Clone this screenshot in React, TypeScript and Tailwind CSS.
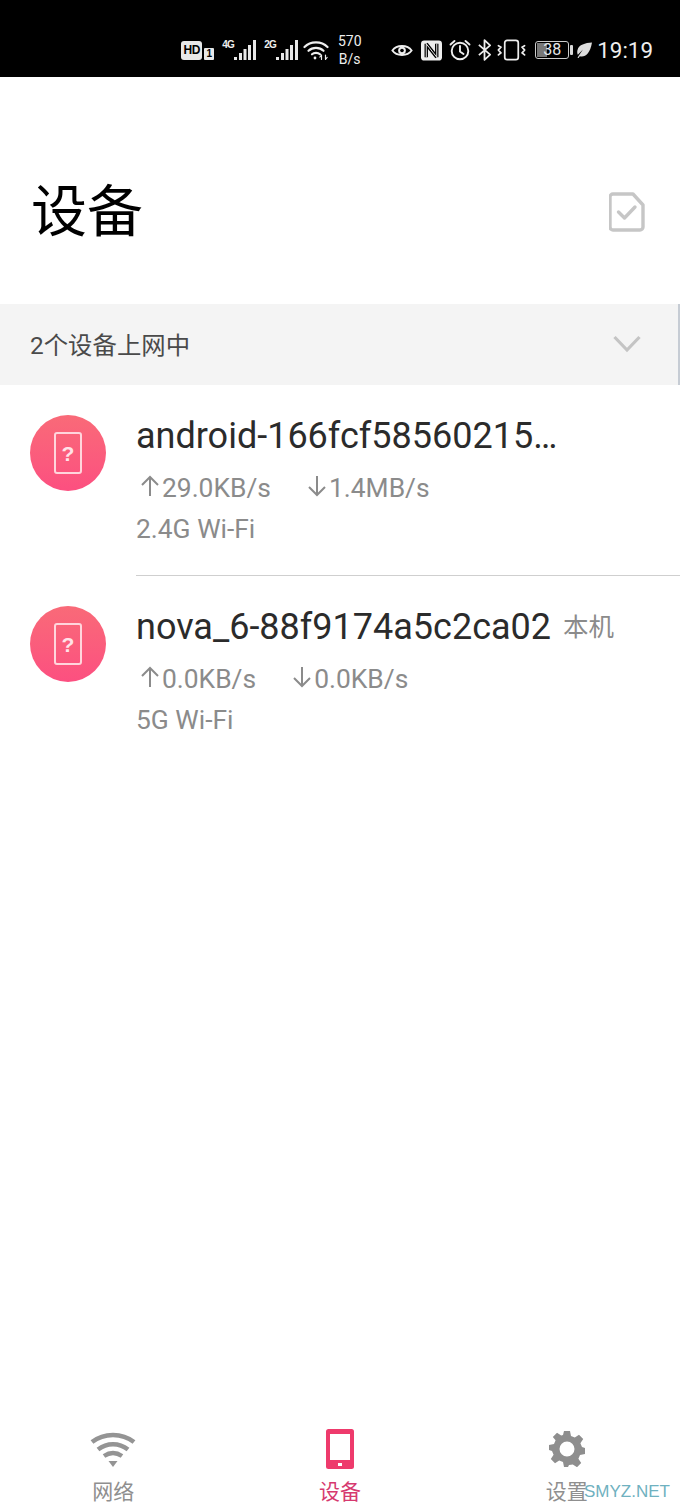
const font = "[font-family:Roboto,'Noto_Sans_CJK_SC',sans-serif]";

function Signal({ label }: { label: string }) {
  return (
    <div className="relative w-[34px] h-[21px] shrink-0">
      <span className="absolute left-0 top-[0px] text-[10px] leading-[10px] font-bold text-[#eeeeee] tracking-[-0.8px] [font-family:'Liberation_Sans',sans-serif]">{label}</span>
      <svg viewBox="0 0 34 21" className="absolute inset-0 w-[34px] h-[21px]" fill="#e8e8e8">
        <rect x="12" y="17" width="3" height="3" />
        <rect x="17" y="13" width="3" height="7" />
        <rect x="21.500" y="9" width="3" height="11" />
        <rect x="26" y="5" width="3" height="15" />
        <rect x="31" y="0" width="3" height="20" />
      </svg>
    </div>
  );
}

function StatusBar() {
  return (
    <div className="h-[77px] bg-black flex items-center justify-end pr-[27px] pt-[23px] text-[#eeeeee] shrink-0">
      <div className="w-[21px] h-[19px] bg-[#e8e8e8] rounded-[3px] flex items-center justify-center text-black text-[12px] font-bold leading-none tracking-[-0.5px] [font-family:'Liberation_Sans',sans-serif]">HD</div>
      <div className="ml-[2px] mt-[7px] w-[10px] h-[12px] bg-[#e8e8e8] rounded-[1px] flex items-center justify-center text-black text-[10px] font-bold leading-none [font-family:'Liberation_Sans',sans-serif]">1</div>
      <div className="ml-[8px]"><Signal label="4G" /></div>
      <div className="ml-[8px]"><Signal label="2G" /></div>
      <svg viewBox="0 0 26 20" className="ml-[5px] w-[26px] h-[20px]" fill="none" stroke="#eeeeee" strokeWidth="2.200" strokeLinecap="round">
        <path d="M1.500 7C7.500 .8 18.500 .8 24.500 7" />
        <path d="M5.500 10.800C9.500 7 16.500 7 20.500 10.800" />
        <path d="M9 14.300C11 12.500 15 12.500 17 14.300" />
        <circle cx="12" cy="18" r="1.400" fill="#eeeeee" stroke="none" />
        <path d="M18.500 15v4.500M18.500 15l-1.600 2M22.500 19.500V15M22.500 19.500l1.600-2" strokeWidth="1.200" />
      </svg>
      <div className="ml-[8px] w-[25px] text-center text-[14px] leading-[18px]">
        <div>570</div>
        <div>B/s</div>
      </div>
      <svg viewBox="0 0 24 18" className="ml-[29px] w-[22px] h-[17px]" fill="none" stroke="#eeeeee" strokeWidth="2">
        <path d="M1.500 9C6 2.500 18 2.500 22.500 9 18 15.500 6 15.500 1.500 9Z" />
        <circle cx="12" cy="9" r="4.200" fill="#eeeeee" stroke="none" />
        <circle cx="12" cy="9" r="2" fill="#000" stroke="none" />
      </svg>
      <svg viewBox="0 0 22 21" className="ml-[8px] w-[21px] h-[21px]">
        <rect x="0" y="0" width="22" height="21" rx="3.500" fill="#eeeeee" />
        <path d="M5.500 3.500v14M5.500 3.500l11 14M16.500 3.500v14" fill="none" stroke="#000" strokeWidth="3.600" />
        <path d="M5.500 3.500v14M5.500 3.500l11 14M16.500 3.500v14" fill="none" stroke="#eeeeee" strokeWidth="1" />
      </svg>
      <svg viewBox="0 0 22 22" className="ml-[7px] w-[22px] h-[22px]" fill="none" stroke="#eeeeee" strokeWidth="1.900" strokeLinecap="round">
        <circle cx="11" cy="12" r="8.300" />
        <path d="M11 7v5.500l3.500 2.500M1.500 5.500 5.500 2M20.500 5.500 16.500 2" />
      </svg>
      <svg viewBox="0 0 16 24" className="ml-[6px] w-[15px] h-[24px]" fill="none" stroke="#eeeeee" strokeWidth="1.900" strokeLinejoin="round">
        <path d="M2 6.500 14 17l-6 5.500v-21l6 5.500L2 17.500" />
      </svg>
      <svg viewBox="0 0 30 22" className="ml-[5px] w-[29px] h-[22px]" fill="none" stroke="#eeeeee" strokeWidth="1.800" strokeLinecap="round">
        <rect x="8" y="1" width="14" height="20" rx="2.500" />
        <path d="M1.500 6.500l2.500 1.500-2.500 3 2.500 3-2.500 2M28.500 6.500l-2.500 1.500 2.500 3-2.500 3 2.500 2" />
      </svg>
      <div className="ml-[9px] relative w-[34px] h-[18px] border border-[#cccccc] rounded-[3px] overflow-hidden flex items-center justify-center">
        <div className="absolute left-[1px] top-[1px] bottom-[1px] w-[10px] bg-[#777777]" />
        <span className="relative text-[16px] leading-none text-[#e8e8e8]">38</span>
      </div>
      <div className="ml-[1px] w-[3px] h-[10px] bg-[#d8d8d8] rounded-[1px]" />
      <svg viewBox="0 0 16 16" className="ml-[3px] w-[16px] h-[16px]" fill="#dddddd">
        <path d="M16 .5C9 1 3 2.500 1.500 8c-.5 2-.3 3.500.3 4.700L7 7.500 2.500 14l-1 2 1 .2 1.300-2C9 15.500 14 12 16 .5Z" />
      </svg>
      <span className="ml-[5px] text-[22.400px] leading-none text-[#eeeeee]">19:19</span>
    </div>
  );
}

function DeviceIcon() {
  return (
    <div className="w-[76px] h-[76px] rounded-full bg-gradient-to-b from-[#f96a78] to-[#fc4f80] flex items-center justify-center shrink-0">
      <div className="w-[28px] h-[42px] rounded-[3px] border-2 border-[#ffd5dc] flex items-center justify-center text-[#ffe3e8] text-[21px] font-bold leading-none [font-family:'Liberation_Sans',sans-serif]">?</div>
    </div>
  );
}

function Speed({ up, down }: { up: string; down: string }) {
  return (
    <div className="flex items-center h-[30px] gap-[35px] text-[26.400px] leading-[30px] text-[#8b8b8b]">
      <span className="flex items-center">
        <svg viewBox="0 0 22 24" className="w-[22px] h-[24px] mr-[1px] mt-[-4px]" fill="none" stroke="#8b8b8b" strokeWidth="2">
          <path d="M11 22V3M3 11l8-8 8 8" />
        </svg>
        {up}
      </span>
      <span className="flex items-center">
        <svg viewBox="0 0 22 24" className="w-[22px] h-[24px] mr-[1px] mt-[-4px]" fill="none" stroke="#8b8b8b" strokeWidth="2">
          <path d="M11 2v19M3 13l8 8 8-8" />
        </svg>
        {down}
      </span>
    </div>
  );
}

function Row({ name, tag, up, down, band, divider }: { name: string; tag?: string; up: string; down: string; band: string; divider?: boolean }) {
  return (
    <div className="pl-[30px] flex">
      <div className="pt-[30px] w-[106px] shrink-0"><DeviceIcon /></div>
      <div className={`flex-1 h-[191px] pt-[30px] ${divider ? "border-b border-[#cfcfcf]" : ""}`}>
        <div className="flex items-center h-[42px]">
          <span className="text-[36px] leading-[42px] text-[#2b2b2b]">{name}</span>
          {tag && <span className="ml-[12px] text-[25.500px] leading-[30px] text-[#8b8b8b]">{tag}</span>}
        </div>
        <div className="mt-[16px] ml-[3px]"><Speed up={up} down={down} /></div>
        <div className="mt-[11px] text-[26.400px] leading-[30px] text-[#8b8b8b]">{band}</div>
      </div>
    </div>
  );
}

function NavItem({ label, color, children }: { label: string; color: string; children: React.ReactNode }) {
  return (
    <div className="flex-1 flex flex-col items-center">
      <div className="h-[42px] flex items-center justify-center">{children}</div>
      <div className={`mt-[8px] text-[21px] leading-[28px] ${color}`}>{label}</div>
    </div>
  );
}

export default function App() {
  return (
    <div className={`w-[680px] h-[1511px] bg-white flex flex-col overflow-hidden relative ${font}`}>
      <StatusBar />
      <div className="h-[227px] flex items-center justify-between pl-[31px] pr-[35px] pt-[43px] shrink-0">
        <h1 className="text-[56px] leading-none text-black font-normal">设备</h1>
        <svg viewBox="0 0 36 40" className="w-[36px] h-[40px] mt-[-1px]" fill="none" stroke="#c6c6c6" strokeWidth="3.400" strokeLinejoin="round" strokeLinecap="round">
          <path d="M4 2h20l10 11v22a3 3 0 0 1-3 3H4a3 3 0 0 1-3-3V5a3 3 0 0 1 3-3Z" />
          <path d="M9.500 20l6 6 10.500-11" />
        </svg>
      </div>
      <div className="h-[81px] bg-[#f4f4f4] flex items-center justify-between pl-[30px] pr-[37px] border-r-2 border-[#c6ccd4] shrink-0">
        <span className="text-[24.400px] leading-[30px] text-[#4a4a4a] mt-[2px]">2个设备上网中</span>
        <svg viewBox="0 0 28 18" className="w-[28px] h-[18px] mt-[-2px]" fill="none" stroke="#c4c4c4" strokeWidth="3.200">
          <path d="M1.500 2 14 15 26.500 2" />
        </svg>
      </div>
      <Row name="android-166fcf58560215…" up="29.0KB/s" down="1.4MB/s" band="2.4G Wi-Fi" divider />
      <Row name="nova_6-88f9174a5c2ca02" tag="本机" up="0.0KB/s" down="0.0KB/s" band="5G Wi-Fi" />
      <div className="mt-auto h-[83px] flex shrink-0">
        <NavItem label="网络" color="text-[#8f8f8f]">
          <svg viewBox="0 0 46 36" className="w-[46px] h-[36px]" fill="none" stroke="#949494" strokeWidth="4.500">
            <path d="M2 11C14 1.500 32 1.500 44 11" />
            <path d="M8 18.500C17 11.500 29 11.500 38 18.500" />
            <path d="M14 25C20 21 26 21 32 25" />
            <path d="M18.500 30h9L23 36Z" fill="#949494" stroke="none" />
          </svg>
        </NavItem>
        <NavItem label="设备" color="text-[#d6396f]">
          <svg viewBox="0 0 28 40" className="w-[28px] h-[40px]">
            <rect x="0" y="0" width="28" height="40" rx="2.500" fill="#ee3a6c" />
            <rect x="4" y="5" width="20" height="26" fill="#fff" />
            <rect x="12" y="34" width="4" height="3" fill="#fff" />
          </svg>
        </NavItem>
        <NavItem label="设置" color="text-[#8f8f8f]">
          <svg viewBox="0 0 36 36" className="w-[36px] h-[36px]" fill="#8e8e8e">
            <path fillRule="evenodd" d="M15 0h6l1 5 3.800 1.600L30 3.800l4.200 4.200-2.800 4.200L33 16l3 1v6l-5 1-1.600 3.800 2.800 4.200-4.200 4.200-4.200-2.800L20 34l-1 2h-4l-1-5-3.800-1.600L6 32.200 1.800 28l2.800-4.200L3 20l-3-1v-5l5-1 1.600-3.800L3.800 6 8 1.800 12.200 4.600 14 4Z M18 10.500a7.500 7.500 0 1 0 0 15 7.500 7.500 0 0 0 0-15Z" />
          </svg>
        </NavItem>
      </div>
      <div className="absolute left-[584px] top-[1481px] text-[17px] leading-[22px] text-[#6fb1c0] [font-family:'Liberation_Sans',sans-serif]">SMYZ.NET</div>
    </div>
  );
}
